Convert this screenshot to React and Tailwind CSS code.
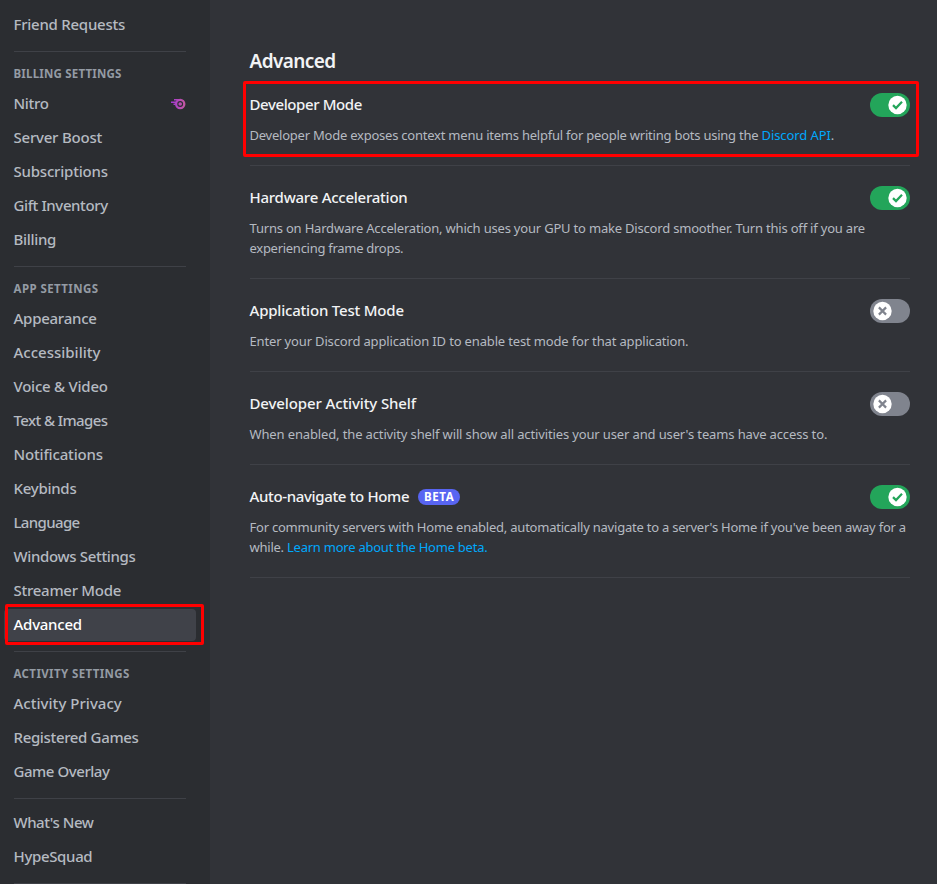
const sidebar = [
  { items: [['Friend Requests', 'tracking-[-0.25px]']] },
  {
    title: 'Billing Settings',
    spacing: 'tracking-[0.2px]',
    items: [
      ['Nitro', 'tracking-[-0.3px]'],
      ['Server Boost', 'tracking-[-0.22px]'],
      ['Subscriptions', 'tracking-[-0.2px]'],
      ['Gift Inventory', 'tracking-[-0.4px]'],
      ['Billing', 'tracking-[-0.3px]'],
    ],
  },
  {
    title: 'App Settings',
    spacing: 'tracking-[0.42px]',
    items: [
      ['Appearance', 'tracking-[-0.25px]'],
      ['Accessibility', 'tracking-normal'],
      ['Voice & Video', 'tracking-[-0.24px]'],
      ['Text & Images', 'tracking-[-0.6px]'],
      ['Notifications', 'tracking-[-0.17px]'],
      ['Keybinds', 'tracking-[-0.27px]'],
      ['Language', 'tracking-[-0.65px]'],
      ['Windows Settings', 'tracking-[-0.34px]'],
      ['Streamer Mode', 'tracking-[-0.27px]'],
      ['Advanced', 'tracking-[-0.25px]'],
    ],
  },
  {
    title: 'Activity Settings',
    spacing: 'tracking-[0.38px]',
    items: [
      ['Activity Privacy', 'tracking-[0.03px]'],
      ['Registered Games', 'tracking-[-0.35px]'],
      ['Game Overlay', 'tracking-[-0.45px]'],
    ],
  },
  {
    items: [
      ["What's New", 'tracking-[-0.45px]'],
      ['HypeSquad', 'tracking-[-0.34px]'],
    ],
  },
];

const link = 'text-[#00a8fc]';

const settings = [
  {
    title: 'Developer Mode',
    spacing: 'tracking-[-0.4px]',
    on: true,
    marked: true,
    lines: [
      [<>Developer Mode exposes context menu items helpful for people writing bots using the <a className={`${link} tracking-[-0.1px]`}>Discord API</a>.</>, 'tracking-[-0.23px]'],
    ],
  },
  {
    title: 'Hardware Acceleration',
    spacing: 'tracking-[-0.25px]',
    on: true,
    lines: [
      ['Turns on Hardware Acceleration, which uses your GPU to make Discord smoother. Turn this off if you are', 'tracking-[-0.195px]'],
      ['experiencing frame drops.', 'tracking-[-0.28px]'],
    ],
  },
  {
    title: 'Application Test Mode',
    spacing: 'tracking-[-0.2px]',
    on: false,
    lines: [['Enter your Discord application ID to enable test mode for that application.', 'tracking-[-0.16px]']],
  },
  {
    title: 'Developer Activity Shelf',
    spacing: 'tracking-[-0.12px]',
    on: false,
    lines: [["When enabled, the activity shelf will show all activities your user and user's teams have access to.", 'tracking-[-0.135px]']],
  },
  {
    title: 'Auto-navigate to Home',
    spacing: 'tracking-[-0.35px]',
    on: true,
    beta: true,
    lines: [
      ["For community servers with Home enabled, automatically navigate to a server's Home if you've been away for a", 'tracking-[-0.225px]'],
      [<>while. <a className={link}>Learn more about the Home beta.</a></>, 'tracking-[-0.24px]'],
    ],
  },
];

function NitroIcon() {
  return (
    <svg width="16" height="12" viewBox="0 0 16 12" fill="none">
      <defs>
        <linearGradient id="nitro" x1="0" y1="0" x2="16" y2="0" gradientUnits="userSpaceOnUse">
          <stop stopColor="#a035d8" />
          <stop offset="1" stopColor="#c65a9e" />
        </linearGradient>
      </defs>
      <circle cx="10.2" cy="6" r="4.1" stroke="url(#nitro)" strokeWidth="2.3" />
      <circle cx="10.2" cy="6" r="1.8" fill="url(#nitro)" />
      <path d="M4 1.7H10M1 4.3H6.5M3.5 6.2H5.5" stroke="url(#nitro)" strokeWidth="1.4" />
    </svg>
  );
}

function Toggle({ on }) {
  return (
    <svg width="40" height="24" viewBox="0 0 40 24" fill="none" className="shrink-0">
      <rect width="40" height="24" rx="12" fill={on ? '#23a55a' : '#80848e'} />
      <circle cx={on ? 27.5 : 12.5} cy="12" r="9.2" fill="#fff" />
      {on ? (
        <path d="M23 12.1L26 15.1L32 8.7" stroke="#23a55a" strokeWidth="2.2" />
      ) : (
        <path d="M8.9 8.4L16.1 15.6M16.1 8.4L8.9 15.6" stroke="#80848e" strokeWidth="2.2" />
      )}
    </svg>
  );
}

function NavItem({ label, spacing }) {
  const active = label === 'Advanced';
  return (
    <div className={`relative mb-0.5 flex h-8 items-center justify-between rounded pr-2.5 pl-[9.5px] text-[15px] font-medium ${active ? 'bg-[#404249] text-white' : 'text-[#b5bac1]'}`}>
      <span className={`pb-0.5 whitespace-nowrap ${spacing}`}>{label}</span>
      {label === 'Nitro' && <NitroIcon />}
      {active && <div className="absolute -top-[5px] -right-2 -bottom-1 left-px rounded-xs border-3 border-[#ff0000]" />}
    </div>
  );
}

export default function App() {
  return (
    <div className="flex h-[884px] w-[937px] overflow-hidden bg-[#313338] font-['Noto_Sans',sans-serif]">
      <nav className="w-[210px] shrink-0 bg-[#2b2d31] pt-[9px] pr-3.5 pl-1">
        {sidebar.map((group, i) => (
          <section key={i} className="flex flex-col">
            {group.title && (
              <h2 className={`flex h-7 items-center px-[9.5px] text-[11.5px] font-bold text-[#949ba4] uppercase ${group.spacing}`}>{group.title}</h2>
            )}
            {group.items.map(([label, spacing]) => <NavItem key={label} label={label} spacing={spacing} />)}
            <div className="mx-2.5 my-2 h-px shrink-0 bg-[#3f4147]" />
          </section>
        ))}
      </nav>
      <main className="w-[700px] pt-[51px] pl-10">
        <h1 className="mb-[22px] -ml-[0.5px] h-5 text-[19px] leading-5 font-semibold tracking-[-0.6px] text-[#f2f3f5]">Advanced</h1>
        {settings.map((s) => (
          <section key={s.title} className="relative mb-5 border-b border-[#3f4147] pb-5">
            <div className="mb-2 flex h-6 items-center justify-between">
              <h3 className={`-ml-[0.5px] flex items-center gap-[9px] pb-0.5 text-[15px] font-medium whitespace-nowrap text-[#f2f3f5] ${s.spacing}`}>
                {s.title}
                {s.beta && <span className="mt-0.5 flex h-4 w-[42px] items-center justify-center rounded-full bg-[#5865f2] text-[11.5px] font-bold tracking-[0.6px] text-white">BETA</span>}
              </h3>
              <Toggle on={s.on} />
            </div>
            {s.lines.map(([line, spacing], i) => (
              <p key={i} className={`-ml-[0.5px] text-[13px] leading-5 whitespace-nowrap text-[#b5bac1] ${spacing}`}>{line}</p>
            ))}
            {s.marked && <div className="absolute -top-3 -right-[9px] bottom-2 -left-[7px] rounded-xs border-3 border-[#ff0000]" />}
          </section>
        ))}
      </main>
    </div>
  );
}
